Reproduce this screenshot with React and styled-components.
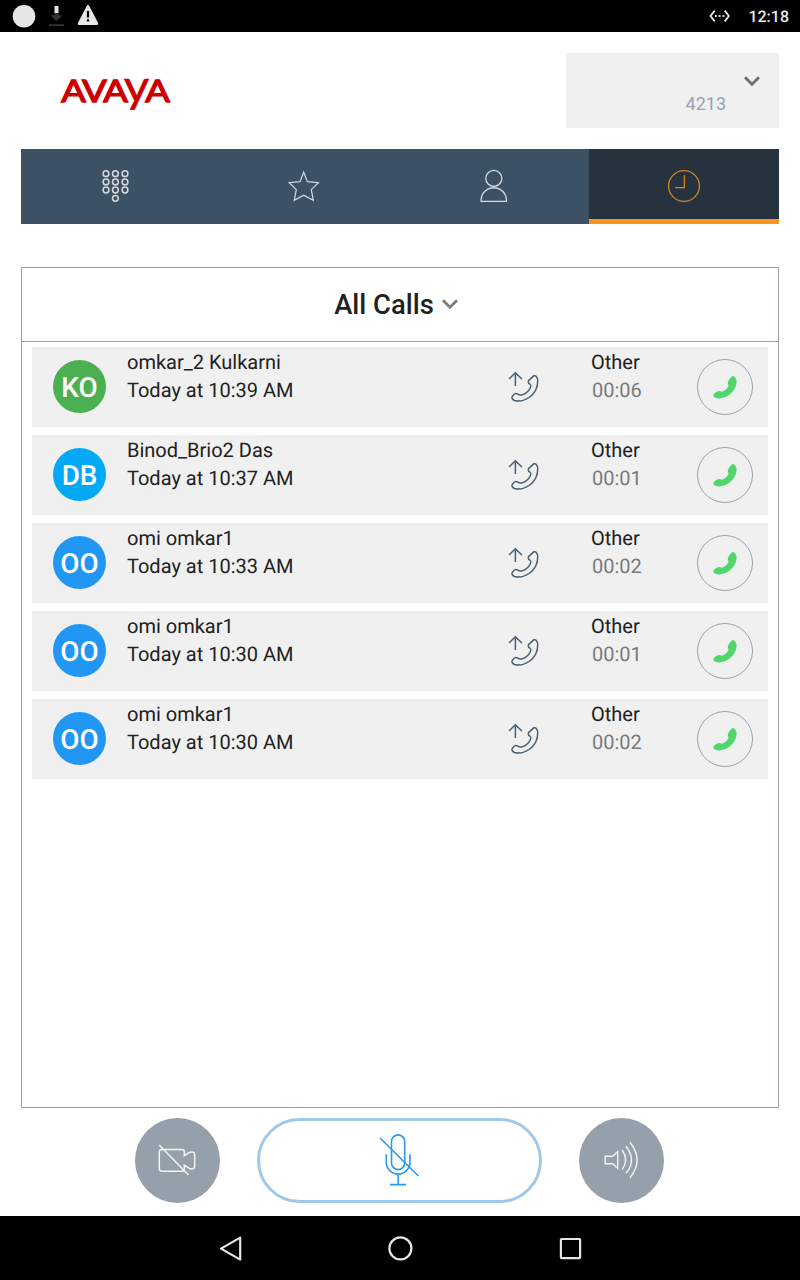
import React from "react";
import styled, { createGlobalStyle } from "styled-components";

const GlobalStyle = createGlobalStyle`
  * { box-sizing: border-box; }
  body { margin: 0; background: #fff; font-family: Roboto, "Liberation Sans", sans-serif; text-rendering: geometricPrecision; }
  svg { display: block; flex: none; }
  button { font: inherit; padding: 0; margin: 0; border: 0; background: none; }
`;

const Screen = styled.div`
  width: 800px;
  height: 1280px;
  display: flex;
  flex-direction: column;
  background: #fff;
  overflow: hidden;
`;

const StatusBar = styled.div`
  height: 32px;
  padding: 0 11px 0 12px;
  display: flex;
  justify-content: space-between;
  align-items: center;
  background: #000;
`;

const StatusGroup = styled.div`
  display: flex;
  align-items: center;
  gap: ${(p) => p.$gap}px;
`;

const Clock = styled.span`
  padding-top: 1px;
  font-size: 16px;
  font-weight: 500;
  line-height: 31px;
  color: #e6e6e6;
`;

const Header = styled.header`
  height: 117px;
  padding: 21px 21px 21px 56px;
  display: flex;
  justify-content: space-between;
`;

const Account = styled.button`
  width: 213px;
  height: 75px;
  padding: 16px 17px 0 0;
  display: flex;
  justify-content: flex-end;
  align-items: flex-start;
  gap: 16px;
  background: #f0f0f0;
`;

const Extension = styled.span`
  padding-top: 24px;
  font-size: 18px;
  line-height: 22px;
  color: #98a3b0;
`;

const Tabs = styled.nav`
  height: 75px;
  margin: 0 21px;
  display: grid;
  grid-template-columns: 190px 189px 189px 190px;
  background: #3d5165;
`;

const Tab = styled.button`
  display: flex;
  justify-content: center;
  padding-top: 20px;
  color: ${(p) => (p.$active ? "#d9831f" : "#d5dae0")};
  background: ${(p) => (p.$active ? "#26323e" : "transparent")};
  border-bottom: ${(p) => (p.$active ? "5px solid #f7941d" : "0")};
`;

const Panel = styled.section`
  height: 841px;
  margin: 43px 21px 0;
  border: 1px solid #98a1ab;
`;

const Filter = styled.button`
  width: 100%;
  height: 74px;
  padding: 0 6px 0 0;
  display: flex;
  justify-content: center;
  align-items: center;
  gap: 6px;
  border-bottom: 1px solid #98a1ab;
  font-size: 27.4px;
  font-weight: 500;
  color: #212121;

  svg {
    margin-bottom: 5px;
  }
`;

const CallList = styled.ul`
  list-style: none;
  margin: 0;
  padding: 5px 10px;
  display: flex;
  flex-direction: column;
  gap: 8px;
`;

const CallRow = styled.li`
  height: 80px;
  padding: 0 15px 0 21px;
  display: grid;
  grid-template-columns: 53px 398.5px 84.5px 108px 56px;
  background: #f0f0f0;
`;

const Avatar = styled.div`
  width: 53px;
  height: 53px;
  margin-top: 13px;
  border-radius: 50%;
  background: ${(p) => p.$color};
  color: #fff;
  font-size: 27.8px;
  font-weight: 500;
  line-height: 56px;
  text-align: center;
`;

const Details = styled.div`
  padding: 1px 0 0 ${(p) => p.$indent}px;
  font-size: 20px;
  line-height: 28px;
  color: #212121;
  white-space: nowrap;
`;

const Duration = styled.div`
  padding-left: 1px;
  color: #7a7a7a;
`;

const Direction = styled.div`
  padding-top: 20px;
`;

const CallButton = styled.button`
  width: 56px;
  height: 56px;
  margin-top: 12px;
  border: 1px solid #98a1ab;
  border-radius: 50%;
  display: flex;
  align-items: center;
  justify-content: center;
`;

const Controls = styled.div`
  height: 108px;
  padding: 10px 136px 0 135px;
  display: flex;
  justify-content: space-between;
`;

const RoundButton = styled.button`
  width: 85px;
  height: 85px;
  border-radius: 50%;
  background: #96a0aa;
  color: #f2f4f5;
`;

const MuteButton = styled.button`
  width: 285px;
  height: 85px;
  border: 3px solid #9fc8ea;
  border-radius: 43px;
  display: flex;
  align-items: center;
  justify-content: center;
  color: #2a9af0;
`;

const NavBar = styled.footer`
  height: 64px;
  display: flex;
  justify-content: center;
  gap: 130px;
  padding-top: 12px;
  background: #000;
  color: #e6e6e6;
`;

const LogoText = styled.text`
  font-family: Lato, sans-serif;
  font-weight: 400;
  fill: #cc0000;
  stroke: #cc0000;
  stroke-width: ${(p) => (p.$lower ? 0.5 : 1.3)}px;
  text-transform: ${(p) => (p.$lower ? "lowercase" : "none")};
`;

function Icon({ w, h, sw = 1.2, children }) {
  return (
    <svg width={w} height={h} viewBox={`0 0 ${w} ${h}`} fill="none" stroke="currentColor" strokeWidth={sw}>
      {children}
    </svg>
  );
}

function Logo() {
  return (
    <svg width="120" height="64" viewBox="0 0 120 64" role="img">
      <LogoText x="5.2" y="48.5" fontSize="31" textLength="24.6" lengthAdjust="spacingAndGlyphs">A</LogoText>
      <LogoText x="26" y="48.5" fontSize="31" textLength="24.8" lengthAdjust="spacingAndGlyphs">V</LogoText>
      <LogoText x="47.2" y="48.5" fontSize="31" textLength="24.6" lengthAdjust="spacingAndGlyphs">A</LogoText>
      <LogoText $lower x="67.8" y="48.8" fontSize="45.5" textLength="25.5" lengthAdjust="spacingAndGlyphs">Y</LogoText>
      <LogoText x="89.2" y="48.5" fontSize="31" textLength="24.6" lengthAdjust="spacingAndGlyphs">A</LogoText>
    </svg>
  );
}

function Chevron({ color }) {
  return (
    <svg width="20" height="20" viewBox="0 0 20 20" fill="none" stroke={color} strokeWidth="2.8">
      <path d="M3 8.3l7 7 7-7" />
    </svg>
  );
}

const KeypadIcon = () => (
  <Icon w={40} h={35} sw={1.5}>
    {[10, 19.4, 29].map((x) => [4.7, 12.9, 21].map((y) => <circle key={`${x}-${y}`} cx={x} cy={y} r="2.9" />))}
    <circle cx="19.4" cy="29.3" r="2.9" />
  </Icon>
);

const StarIcon = () => (
  <Icon w={39} h={35}>
    <path d="M17.7 3.2L21.4 12.7L32.4 13.7L25.3 20.6L27.3 31.3L17.7 26.3L8.3 31.3L10.3 20.6L3.2 13.7L14 12.7Z" />
  </Icon>
);

const PersonIcon = () => (
  <Icon w={39} h={35} sw={1.3}>
    <circle cx="18.8" cy="9.4" r="8" />
    <path d="M6.1 32.3V30.3a12.7 12.7 0 0 1 25.3 0v2z" />
  </Icon>
);

const HistoryIcon = () => (
  <Icon w={40} h={35} sw={1.3}>
    <circle cx="20" cy="17" r="15.4" />
    <path d="M20.4 6v12.6H11" />
  </Icon>
);

const OutgoingIcon = () => (
  <Icon w={40} h={40} sw={1.5}>
    <g stroke="#4a5d73">
      <path d="M10.4 19V6M4 12l6.4-6.2L16.8 12" />
      <path d="M28.6 8.9C31 8 32.5 10.5 32.7 13C33 20 30 26.5 24 30.5C19 33.8 13 34.5 9.5 33.5C7 32.3 6.3 30.5 7.5 29C9 27 11 26 12.5 26.8C14 28 15.5 28.3 17.5 27.8C21.5 26.5 24.3 23.5 25.8 19.8C26.2 18.5 25.8 17.8 24.7 17C23 16 22.8 14.8 23.8 13.4Z" strokeLinejoin="round" />
    </g>
  </Icon>
);

const HandsetIcon = () => (
  <svg width="28" height="28" viewBox="0.4 0 28 28" fill="#50d66b">
    <path d="M21.3 3.6C22 2.9 22.8 2.9 23.5 3.6C25.3 5.2 26.1 6.5 26 9.2C25.6 15.5 20.5 22.5 12.5 24.8C9.3 25.6 6 25.7 4.3 24.6C3 23.6 2.5 22.5 2.8 21.7C4.2 20 6.3 18.6 8.3 18.1C9.3 18 10.1 18.9 11.3 18.8C14.2 18 16.9 15.6 17.9 13.1C18.2 12 17.2 11.2 17.1 10C17.6 7.6 19.3 5.3 21.3 3.6Z" />
  </svg>
);

const VideoOffIcon = () => (
  <Icon w={85} h={85} sw={1.5}>
    <path d="M49.3 37.7V33.8q0-2.4-2.4-2.4H27q-2.7 0-2.7 2.7v16.5q0 2.7 2.7 2.7h19.9q2.4 0 2.4-2.4V47.2l5.5 3.5q4.9.8 4.9-2.2V36.3q0-3-4.9-2.1z" />
    <path d="M24.2 27l29.3 30" />
  </Icon>
);

const MicOffIcon = () => (
  <Icon w={85} h={85} sw={1.6}>
    <rect x="34.5" y="16.9" width="13.2" height="34.7" rx="6.6" />
    <path d="M29.3 36.3v8a11.8 11.8 0 0 0 23.7 0v-8M41.2 56v10.6M33 66.6h16M23 20l38.4 38" />
  </Icon>
);

const SpeakerIcon = () => (
  <Icon w={85} h={85} sw={1.4}>
    <path d="M26.2 38.2h7.5l5-4.6v16.9l-5-4.7h-7.5z" />
    <path d="M43 32q7.4 10 0 19.7M47 28.2q11 14 0 27.2M51 24.3q14.2 18 0 35.4" />
  </Icon>
);

const calls = [
  { initials: "KO", color: "#4caf50", name: "omkar_2 Kulkarni", time: "Today at 10:39 AM", length: "00:06" },
  { initials: "DB", color: "#03a9f4", name: "Binod_Brio2 Das", time: "Today at 10:37 AM", length: "00:01" },
  { initials: "OO", color: "#2196f3", name: "omi omkar1", time: "Today at 10:33 AM", length: "00:02" },
  { initials: "OO", color: "#2196f3", name: "omi omkar1", time: "Today at 10:30 AM", length: "00:01" },
  { initials: "OO", color: "#2196f3", name: "omi omkar1", time: "Today at 10:30 AM", length: "00:02" },
];

export default function App() {
  return (
    <Screen>
      <GlobalStyle />
      <StatusBar>
        <StatusGroup $gap={12}>
          <svg width="24" height="24" viewBox="0 0 24 24">
            <circle cx="12" cy="12.2" r="11.3" fill="#e6e6e6" />
          </svg>
          <svg width="17" height="24" viewBox="0 0 17 24">
            <path d="M6.5 2h4v7h-4z" fill="#e6e6e6" />
            <path d="M6.5 9h4v2.3h4L8.5 17 2.5 11.3h4zM1 20.3h15v1.8H1z" fill="#333" />
          </svg>
          <svg width="22" height="24" viewBox="0 0 22 24">
            <path d="M11 2.3L20 19.7H2z" fill="#e6e6e6" stroke="#e6e6e6" strokeWidth="2.6" strokeLinejoin="round" />
            <path d="M9.9 7h2.2v6.5H9.9zM9.9 15.3h2.2v2.2H9.9z" fill="#000" />
          </svg>
        </StatusGroup>
        <StatusGroup $gap={18}>
          <svg width="22" height="16" viewBox="0 0 22 16" fill="none" stroke="#e6e6e6" strokeWidth="1.8">
            <path d="M6.7 2.6L2.5 8L6.7 13.4M16.7 2.6L20.9 8L16.7 13.4" />
            <path d="M7 8h1.8M10.8 8h1.8M14.6 8h1.8" />
          </svg>
          <Clock>12:18</Clock>
        </StatusGroup>
      </StatusBar>
      <Header>
        <Logo />
        <Account>
          <Extension>4213</Extension>
          <Chevron color="#6f6f6f" />
        </Account>
      </Header>
      <Tabs>
        <Tab><KeypadIcon /></Tab>
        <Tab><StarIcon /></Tab>
        <Tab><PersonIcon /></Tab>
        <Tab $active><HistoryIcon /></Tab>
      </Tabs>
      <Panel>
        <Filter>
          All Calls
          <Chevron color="#7d7d7d" />
        </Filter>
        <CallList>
          {calls.map((call, i) => (
            <CallRow key={i}>
              <Avatar $color={call.color}>{call.initials}</Avatar>
              <Details $indent={21}>
                <div>{call.name}</div>
                <div>{call.time}</div>
              </Details>
              <Direction><OutgoingIcon /></Direction>
              <Details $indent={2}>
                <div>Other</div>
                <Duration>{call.length}</Duration>
              </Details>
              <CallButton><HandsetIcon /></CallButton>
            </CallRow>
          ))}
        </CallList>
      </Panel>
      <Controls>
        <RoundButton><VideoOffIcon /></RoundButton>
        <MuteButton><MicOffIcon /></MuteButton>
        <RoundButton><SpeakerIcon /></RoundButton>
      </Controls>
      <NavBar>
        <Icon w={40} h={40} sw={2.2}>
          <path d="M11 20.6L30.2 9.6v22z" strokeLinejoin="round" />
        </Icon>
        <Icon w={40} h={40} sw={2.2}>
          <circle cx="20.4" cy="20.4" r="11" />
        </Icon>
        <Icon w={40} h={40} sw={2.2}>
          <rect x="10.9" y="11" width="19.2" height="19.2" rx="0.6" />
        </Icon>
      </NavBar>
    </Screen>
  );
}
